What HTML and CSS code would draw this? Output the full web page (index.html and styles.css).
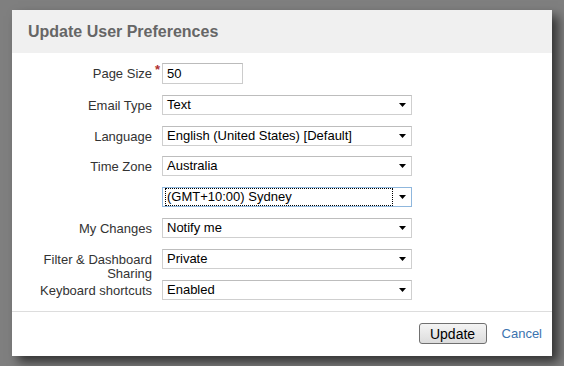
FILE: index.html
```html
<!DOCTYPE html>
<html>
<head>
<meta charset="utf-8">
<link rel="stylesheet" href="styles.css">
</head>
<body>
<div class="dialog">
  <div class="dialog-header"><h2 class="dialog-title">Update User Preferences</h2></div>
  <form class="dialog-body">
    <label class="field-label">Page Size<span class="req">*</span></label>
    <div class="field"><input class="text-input" type="text" value="50"></div>

    <label class="field-label">Email Type</label>
    <div class="field"><div class="select"><span class="select-text">Text</span><svg class="arrow" width="7" height="4" viewBox="0 0 7 4"><path d="M0 0H7L3.5 4Z" fill="#000"/></svg></div></div>

    <label class="field-label">Language</label>
    <div class="field"><div class="select"><span class="select-text">English (United States) [Default]</span><svg class="arrow" width="7" height="4" viewBox="0 0 7 4"><path d="M0 0H7L3.5 4Z" fill="#000"/></svg></div></div>

    <label class="field-label">Time Zone</label>
    <div class="field"><div class="select"><span class="select-text">Australia</span><svg class="arrow" width="7" height="4" viewBox="0 0 7 4"><path d="M0 0H7L3.5 4Z" fill="#000"/></svg></div></div>

    <span class="field-label"></span>
    <div class="field"><div class="select focused"><span class="select-text focus-rect">(GMT+10:00) Sydney</span><svg class="arrow" width="7" height="4" viewBox="0 0 7 4"><path d="M0 0H7L3.5 4Z" fill="#000"/></svg></div></div>

    <label class="field-label">My Changes</label>
    <div class="field"><div class="select"><span class="select-text">Notify me</span><svg class="arrow" width="7" height="4" viewBox="0 0 7 4"><path d="M0 0H7L3.5 4Z" fill="#000"/></svg></div></div>

    <label class="field-label">Filter &amp; Dashboard Sharing</label>
    <div class="field"><div class="select"><span class="select-text">Private</span><svg class="arrow" width="7" height="4" viewBox="0 0 7 4"><path d="M0 0H7L3.5 4Z" fill="#000"/></svg></div></div>

    <label class="field-label">Keyboard shortcuts</label>
    <div class="field"><div class="select"><span class="select-text">Enabled</span><svg class="arrow" width="7" height="4" viewBox="0 0 7 4"><path d="M0 0H7L3.5 4Z" fill="#000"/></svg></div></div>
  </form>
  <div class="dialog-footer">
    <button class="btn" type="button">Update</button>
    <a class="cancel" href="#">Cancel</a>
  </div>
</div>
</body>
</html>
```

FILE: styles.css
```css
* { box-sizing: border-box; }
html, body { margin: 0; height: 100%; }
body {
  background: #7f7f7f;
  font-family: "Liberation Sans", Arial, sans-serif;
  font-size: 13px;
  padding: 10px 0 0 12px;
  overflow: hidden;
}
.dialog {
  width: 540px;
  height: 346px;
  background: #fff;
  box-shadow: 6px 6px 10px rgba(0,0,0,0.6);
  display: flex;
  flex-direction: column;
}
.dialog-header {
  height: 43px;
  background: #f0f0f0;
  display: flex;
  align-items: center;
  padding-left: 16px;
}
.dialog-title {
  margin: 0;
  font-size: 16px;
  font-weight: bold;
  color: #666;
}
.dialog-body {
  margin: 0;
  height: 258px;
  padding-top: 10px;
  display: grid;
  grid-template-columns: 140px 250px;
  grid-template-rows: 21px repeat(7, 20px);
  column-gap: 10px;
  row-gap: 10.8px;
}
.field-label {
  text-align: right;
  color: #333;
  line-height: 14px;
  padding-top: 4px;
  position: relative;
}
.field-label:first-child { padding-top: 4px; }
.req {
  position: absolute;
  right: -8px;
  top: 0;
  color: #b03030;
  font-size: 13px;
  font-weight: bold;
}
.text-input {
  width: 81px;
  height: 21px;
  border: 1px solid #ccc;
  border-top-color: #bbb;
  padding: 0 4px;
  font: inherit;
  color: #000;
  margin: 0;
}
.select {
  height: 20px;
  border: 1px solid #cfcfcf;
  border-top-color: #bdbdbd;
  display: flex;
  align-items: center;
  padding-left: 2px;
  color: #000;
  background: #fff;
}
.select-text {
  flex: 1;
  padding: 1px 1px;
  line-height: 14px;
  border: 1px solid transparent;
}
.select.focused { border-color: #8fb7dd; }
.focus-rect {
  border: 1px dotted #000;
  margin-right: 2px;
}
.arrow { margin: 0 5px 0 4px; flex: none; }
.dialog-footer {
  flex: 1;
  border-top: 1px solid #ddd;
  display: flex;
  justify-content: flex-end;
  align-items: flex-start;
  padding: 11px 10px 0 0;
}
.btn {
  width: 68px;
  height: 21px;
  font: inherit;
  font-size: 14px;
  color: #000;
  border: 1px solid #707070;
  border-radius: 3px;
  background: linear-gradient(#f4f4f4, #dcdcdc);
  padding: 0;
  margin: 0;
}
.cancel {
  color: #3b73af;
  text-decoration: none;
  margin-left: 15px;
  line-height: 21px;
  font-size: 13px;
}
```
